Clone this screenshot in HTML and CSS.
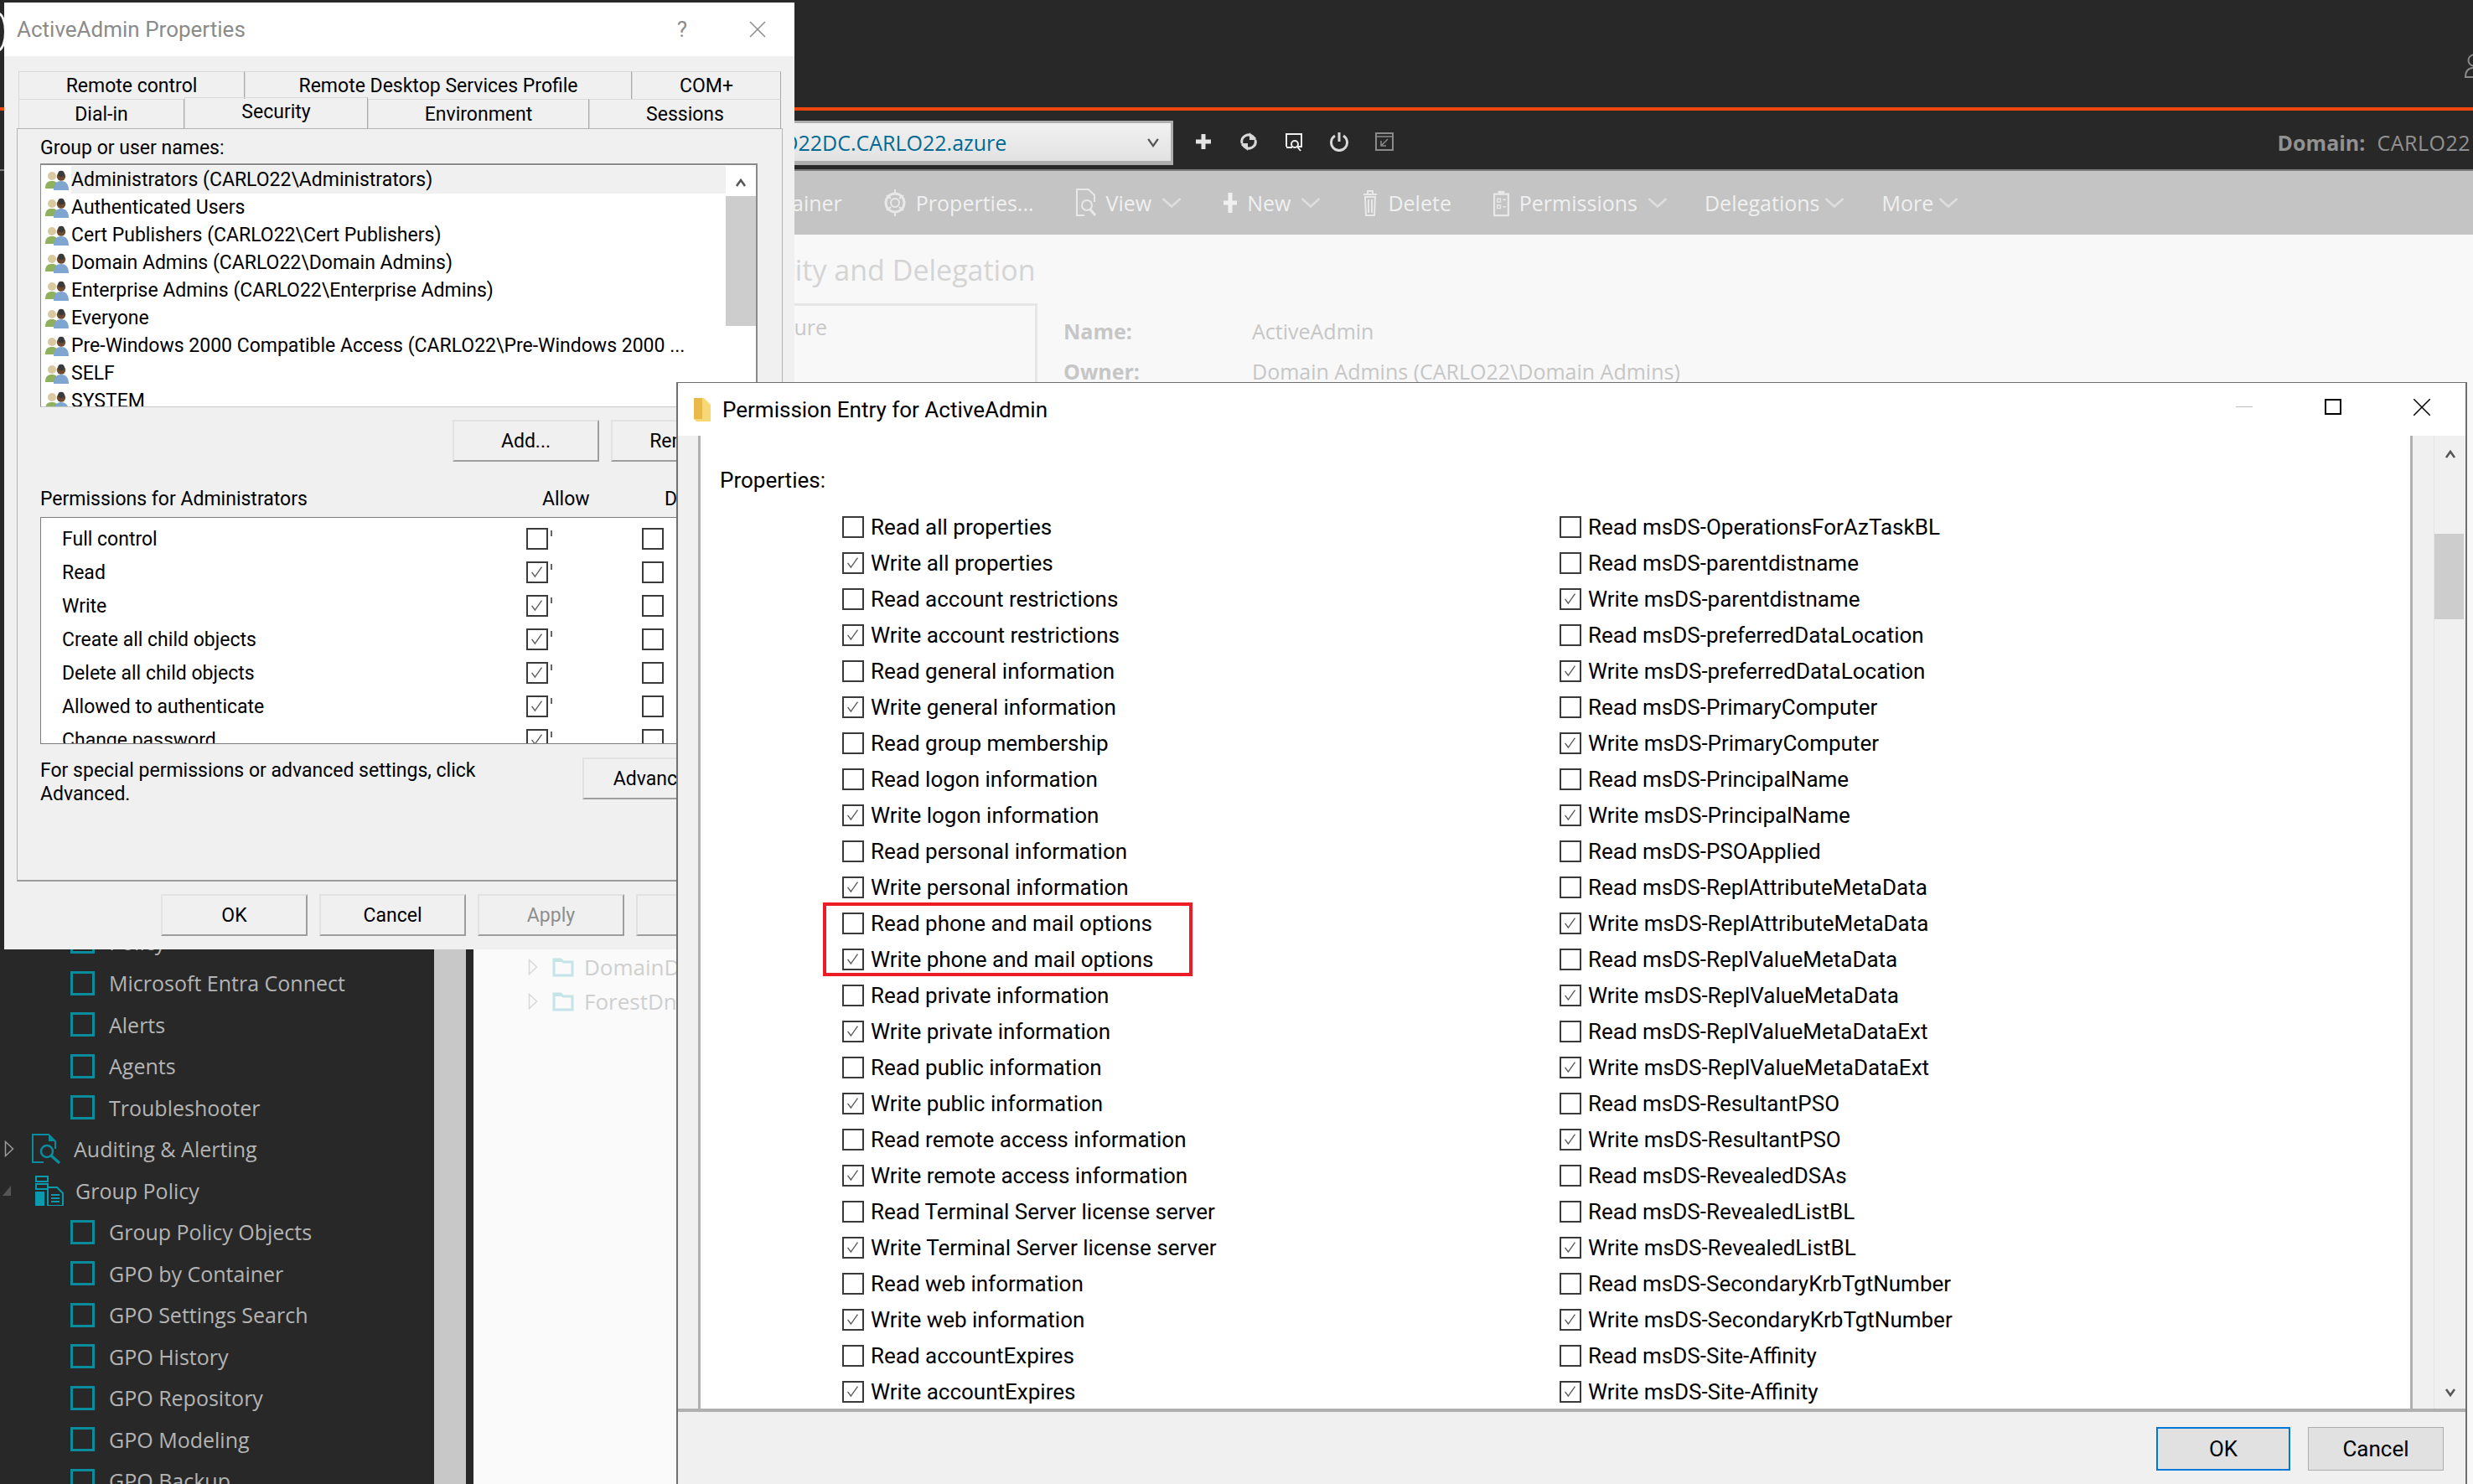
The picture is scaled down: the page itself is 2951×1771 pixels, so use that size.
FILE: index.html
```html
<!DOCTYPE html>
<html lang="en">
<head>
<meta charset="utf-8">
<title>ActiveAdmin Properties</title>
<link rel="stylesheet" href="styles.css">
</head>
<body>
<svg class="defs" width="0" height="0" aria-hidden="true">
  <symbol id="tick" viewBox="0 0 20 20"><path d="M3 10.5 7.5 16.5 17 3" fill="none" stroke="#5a5a5a" stroke-width="1.6"/></symbol>
  <symbol id="chev" viewBox="0 0 24 14"><path d="M1.5 2 12 11.5 22.5 2" fill="none" stroke="currentColor" stroke-width="2.6"/></symbol>
  <symbol id="users" viewBox="0 0 28 24">
    <circle cx="8" cy="7" r="5" fill="#d8c9a0"/><path d="M0 22c0-7 3-9 8-9s7 2 7 9z" fill="#8fb05c"/>
    <circle cx="19" cy="7.500" r="5.200" fill="#6e4a30"/><circle cx="19" cy="4.500" r="3.800" fill="#3a3a3a"/>
    <path d="M10 24c0-8 4-11 9-11s9 3 9 11z" fill="#7ea6d0"/>
  </symbol>
  <symbol id="sq" viewBox="0 0 29 29"><rect x="1.500" y="1.500" width="26" height="26" fill="none" stroke="#0a8c9c" stroke-width="3"/></symbol>
  <symbol id="folder" viewBox="0 0 26 24"><path d="M2 22V3h8l3 3h11v16z" fill="none" stroke="#c4e4e8" stroke-width="3"/><path d="M2 3h8l3 3H2z" fill="#c4e4e8"/></symbol>
  <symbol id="tri" viewBox="0 0 12 20"><path d="M1.500 1.500 10.500 10 1.500 18.500z" fill="none" stroke="currentColor" stroke-width="1.500"/></symbol>
</svg>

<div class="app">
  <header class="top"></header>
  <div class="sub">
    <div class="domain-select"><span class="domain-name">CARLO22DC.CARLO22.azure</span><svg class="select-chev" viewBox="0 0 12 10"><path d="M1 1.500 6 8.500 11 1.500" fill="none" stroke="#555" stroke-width="2"/></svg></div>
    <div class="sub-icons">
      <svg class="sub-icon" viewBox="0 0 24 24"><path d="M12 3v18M3 12h18" stroke="#e4e4e4" stroke-width="5" fill="none"/></svg>
      <svg class="sub-icon" viewBox="0 0 24 24"><path d="M4 14a8 8 0 0 1 13-8l3 3M20 10a8 8 0 0 1-13 8l-3-3" stroke="#d8d8d8" stroke-width="3" fill="none"/><path d="M13 1v9h8zM11 23v-9H3z" fill="#d8d8d8"/></svg>
      <svg class="sub-icon" viewBox="0 0 24 24"><path d="M3 18V3h18v15h-6" stroke="#eee" stroke-width="2" fill="none"/><circle cx="13" cy="15" r="4" stroke="#eee" stroke-width="2" fill="none"/><path d="M16 18l4 5M3 19h7" stroke="#eee" stroke-width="2"/></svg>
      <svg class="sub-icon" viewBox="0 0 24 24"><path d="M7 5a9.500 9.500 0 1 0 10 0" stroke="#d8d8d8" stroke-width="3" fill="none"/><path d="M12 1v11" stroke="#d8d8d8" stroke-width="3"/></svg>
      <svg class="sub-icon" viewBox="0 0 24 24"><rect x="2" y="2" width="20" height="20" fill="none" stroke="#8a8a8a" stroke-width="2"/><path d="M2 6h20M16 9l-8 8M8 11v6h6" stroke="#8a8a8a" stroke-width="1.500" fill="none"/></svg>
    </div>
    <div class="domain-info"><b class="domain-label">Domain:</b><span class="domain-value">CARLO22</span></div>
  </div>

  <div class="workspace">
    <aside class="sidebar">
      <div class="side-list">
        <div class="side-row child"><svg class="side-sq"><use href="#sq"/></svg>Policy</div>
        <div class="side-row child"><svg class="side-sq"><use href="#sq"/></svg>Microsoft Entra Connect</div>
        <div class="side-row child"><svg class="side-sq"><use href="#sq"/></svg>Alerts</div>
        <div class="side-row child"><svg class="side-sq"><use href="#sq"/></svg>Agents</div>
        <div class="side-row child"><svg class="side-sq"><use href="#sq"/></svg>Troubleshooter</div>
        <div class="side-row parent">
          <svg class="side-tri"><use href="#tri"/></svg>
          <svg class="side-icon" viewBox="0 0 36 36"><path d="M14 34H1V1h19l8 8v9" fill="none" stroke="#0a8c9c" stroke-width="2"/><path d="M20 1v8h8z" fill="#0a8c9c"/><circle cx="18" cy="21" r="7" fill="none" stroke="#0a8c9c" stroke-width="2.500"/><path d="M23 26l10 9" stroke="#0a8c9c" stroke-width="3.500"/></svg>
          Auditing &amp; Alerting
        </div>
        <div class="side-row parent">
          <span class="side-open"></span>
          <svg class="side-icon" viewBox="0 0 36 36"><path d="M3 1h14v6H3zM3 10h14v6H3z" fill="none" stroke="#0a9aae" stroke-width="2"/><path d="M2 19h11v17H2z" fill="#0a9aae"/><path d="M17 14h11l7 7v15H17z" fill="none" stroke="#0a9aae" stroke-width="2"/><path d="M21 23h10M21 27h10M21 31h10" stroke="#0a9aae" stroke-width="2"/></svg>
          Group Policy
        </div>
        <div class="side-row child"><svg class="side-sq"><use href="#sq"/></svg>Group Policy Objects</div>
        <div class="side-row child"><svg class="side-sq"><use href="#sq"/></svg>GPO by Container</div>
        <div class="side-row child"><svg class="side-sq"><use href="#sq"/></svg>GPO Settings Search</div>
        <div class="side-row child"><svg class="side-sq"><use href="#sq"/></svg>GPO History</div>
        <div class="side-row child"><svg class="side-sq"><use href="#sq"/></svg>GPO Repository</div>
        <div class="side-row child"><svg class="side-sq"><use href="#sq"/></svg>GPO Modeling</div>
        <div class="side-row child"><svg class="side-sq"><use href="#sq"/></svg>GPO Backup</div>
      </div>
      <div class="side-scroll"></div>
    </aside>

    <main class="main">
      <div class="toolbar">
        <span class="tool tool-first">Container</span>
        <span class="tool"><svg class="tool-icon" viewBox="0 0 26 34"><circle cx="13" cy="17" r="11" fill="none" stroke="#e8e8e8" stroke-width="3"/><circle cx="13" cy="17" r="5" fill="none" stroke="#e8e8e8" stroke-width="2"/><path d="M13 1v6M13 27v6M3 8l5 4M18 22l5 4M3 26l5-4M18 12l5-4" stroke="#e8e8e8" stroke-width="2"/></svg>Properties...</span>
        <span class="tool"><svg class="tool-icon" viewBox="0 0 24 34"><path d="M10 32H1V1h14l7 7v8" fill="none" stroke="#e8e8e8" stroke-width="2"/><circle cx="13" cy="20" r="6" fill="none" stroke="#e8e8e8" stroke-width="2"/><path d="M17 25l6 7" stroke="#e8e8e8" stroke-width="3"/></svg>View<svg class="tool-chev"><use href="#chev"/></svg></span>
        <span class="tool tool-new"><svg class="tool-icon" viewBox="0 0 16 34"><path d="M8 5v24M0 17h16" stroke="#f0f0f0" stroke-width="5"/></svg>New<svg class="tool-chev"><use href="#chev"/></svg></span>
        <span class="tool"><svg class="tool-icon" viewBox="0 0 18 34"><path d="M1 7h16M6 7V3h6v4" stroke="#e8e8e8" stroke-width="2" fill="none"/><path d="M3 10h12l-1 22H4z" fill="none" stroke="#e8e8e8" stroke-width="2"/><path d="M7 13v16M11 13v16" stroke="#e8e8e8" stroke-width="2"/></svg>Delete</span>
        <span class="tool"><svg class="tool-icon" viewBox="0 0 20 36"><path d="M1 7h18v27H1z" fill="none" stroke="#e8e8e8" stroke-width="2.500"/><path d="M6 7V3h8v4z" fill="#e8e8e8"/><path d="M5 13h4v4H5zM12 14h4M5 21h4v4H5zM12 23h4" stroke="#e8e8e8" stroke-width="1.500" fill="none"/></svg>Permissions<svg class="tool-chev"><use href="#chev"/></svg></span>
        <span class="tool tool-tight">Delegations<svg class="tool-chev"><use href="#chev"/></svg></span>
        <span class="tool tool-tight">More<svg class="tool-chev"><use href="#chev"/></svg></span>
      </div>
      <div class="panes">
        <div class="tree">
          <div class="tree-row"><svg class="tree-tri"><use href="#tri"/></svg><svg class="tree-folder"><use href="#folder"/></svg>DomainDnsZones</div>
          <div class="tree-row"><svg class="tree-tri"><use href="#tri"/></svg><svg class="tree-folder"><use href="#folder"/></svg>ForestDnsZones</div>
        </div>
        <div class="detail">
          <h1 class="detail-title">Security and Delegation</h1>
          <div class="detail-body">
            <div class="detail-card">Structure</div>
            <div class="detail-fields">
              <div class="field"><span class="field-label">Name:</span><span>ActiveAdmin</span></div>
              <div class="field"><span class="field-label">Owner:</span><span>Domain Admins (CARLO22\Domain Admins)</span></div>
            </div>
          </div>
        </div>
      </div>
    </main>
  </div>
</div>

<div class="corner-logo"></div>
<svg class="person" viewBox="0 0 24 30"><circle cx="12" cy="8" r="6.500" fill="none" stroke="#8a8a8a" stroke-width="2"/><path d="M2 28c0-8 4-11 10-11s10 3 10 11z" fill="none" stroke="#8a8a8a" stroke-width="2"/></svg>

<section class="win-props">
  <div class="props-title"><span class="props-title-text">ActiveAdmin Properties</span><span class="props-help">?</span><svg class="props-x" viewBox="0 0 20 20"><path d="M1 1 19 19M19 1 1 19" stroke="#8a8a8a" stroke-width="1.500"/></svg></div>
  <div class="props-body">
    <div class="tab-row tab-row-back">
      <span class="tab tw1">Remote control</span><span class="tab tw2">Remote Desktop Services Profile</span><span class="tab tw3">COM+</span>
    </div>
    <div class="tab-row tab-row-front">
      <span class="tab tw4">Dial-in</span><span class="tab tw5 tab-active">Security</span><span class="tab tw6">Environment</span><span class="tab tw7">Sessions</span>
    </div>
    <div class="panel">
      <div class="label">Group or user names:</div>
      <div class="names">
        <div class="names-list">
          <div class="name-row name-sel"><svg class="users"><use href="#users"/></svg><span class="name-text">Administrators (CARLO22\Administrators)</span></div>
          <div class="name-row"><svg class="users"><use href="#users"/></svg><span class="name-text">Authenticated Users</span></div>
          <div class="name-row"><svg class="users"><use href="#users"/></svg><span class="name-text">Cert Publishers (CARLO22\Cert Publishers)</span></div>
          <div class="name-row"><svg class="users"><use href="#users"/></svg><span class="name-text">Domain Admins (CARLO22\Domain Admins)</span></div>
          <div class="name-row"><svg class="users"><use href="#users"/></svg><span class="name-text">Enterprise Admins (CARLO22\Enterprise Admins)</span></div>
          <div class="name-row"><svg class="users"><use href="#users"/></svg><span class="name-text">Everyone</span></div>
          <div class="name-row"><svg class="users"><use href="#users"/></svg><span class="name-text">Pre-Windows 2000 Compatible Access (CARLO22\Pre-Windows 2000 ...</span></div>
          <div class="name-row"><svg class="users"><use href="#users"/></svg><span class="name-text">SELF</span></div>
          <div class="name-row"><svg class="users"><use href="#users"/></svg><span class="name-text">SYSTEM</span></div>
        </div>
        <div class="names-scroll"><svg class="names-up" viewBox="0 0 14 12"><path d="M2 10 7 3 12 10" fill="none" stroke="#555" stroke-width="2.500"/></svg><div class="names-thumb"></div></div>
      </div>
      <div class="btn-row"><span class="btn">Add...</span><span class="btn">Remove</span></div>
      <div class="perm-head"><span class="perm-head-name">Permissions for Administrators</span><span class="perm-head-allow">Allow</span><span>Deny</span></div>
      <div class="perms">
        <div class="perm"><span class="perm-name">Full control</span><span class="cb"></span><span class="perm-tick"></span><span class="cb cb-deny"></span></div>
        <div class="perm"><span class="perm-name">Read</span><span class="cb"><svg class="tick"><use href="#tick"/></svg></span><span class="perm-tick"></span><span class="cb cb-deny"></span></div>
        <div class="perm"><span class="perm-name">Write</span><span class="cb"><svg class="tick"><use href="#tick"/></svg></span><span class="perm-tick"></span><span class="cb cb-deny"></span></div>
        <div class="perm"><span class="perm-name">Create all child objects</span><span class="cb"><svg class="tick"><use href="#tick"/></svg></span><span class="perm-tick"></span><span class="cb cb-deny"></span></div>
        <div class="perm"><span class="perm-name">Delete all child objects</span><span class="cb"><svg class="tick"><use href="#tick"/></svg></span><span class="perm-tick"></span><span class="cb cb-deny"></span></div>
        <div class="perm"><span class="perm-name">Allowed to authenticate</span><span class="cb"><svg class="tick"><use href="#tick"/></svg></span><span class="perm-tick"></span><span class="cb cb-deny"></span></div>
        <div class="perm"><span class="perm-name">Change password</span><span class="cb"><svg class="tick"><use href="#tick"/></svg></span><span class="perm-tick"></span><span class="cb cb-deny"></span></div>
      </div>
      <div class="adv-row"><p class="adv-text">For special permissions or advanced settings, click<br>Advanced.</p><span class="btn">Advanced</span></div>
    </div>
    <div class="props-foot"><span class="btn">OK</span><span class="btn">Cancel</span><span class="btn btn-off">Apply</span><span class="btn">Help</span></div>
  </div>
</section>

<section class="win-entry">
  <div class="entry-title">
    <svg class="entry-folder" viewBox="0 0 22 30"><path d="M1 1h12l8 8v20H4l-3-3z" fill="#f8d775"/><path d="M1 1h10v25H1z" fill="#e9b949"/></svg>
    <span class="entry-title-text">Permission Entry for ActiveAdmin</span>
    <span class="entry-controls">
      <span class="ctl-min"></span><span class="ctl-max"></span>
      <svg class="ctl-close" viewBox="0 0 20 20"><path d="M0 0 20 20M20 0 0 20" stroke="#000" stroke-width="1.500"/></svg>
    </span>
  </div>
  <div class="entry-main">
    <div class="entry-strip"></div>
    <div class="entry-content">
      <div class="entry-label">Properties:</div>
      <div class="entry-grid">
        <div class="col">
          <div class="row"><span class="cb"></span>Read all properties</div>
          <div class="row"><span class="cb"><svg class="tick"><use href="#tick"/></svg></span>Write all properties</div>
          <div class="row"><span class="cb"></span>Read account restrictions</div>
          <div class="row"><span class="cb"><svg class="tick"><use href="#tick"/></svg></span>Write account restrictions</div>
          <div class="row"><span class="cb"></span>Read general information</div>
          <div class="row"><span class="cb"><svg class="tick"><use href="#tick"/></svg></span>Write general information</div>
          <div class="row"><span class="cb"></span>Read group membership</div>
          <div class="row"><span class="cb"></span>Read logon information</div>
          <div class="row"><span class="cb"><svg class="tick"><use href="#tick"/></svg></span>Write logon information</div>
          <div class="row"><span class="cb"></span>Read personal information</div>
          <div class="row"><span class="cb"><svg class="tick"><use href="#tick"/></svg></span>Write personal information</div>
          <div class="row"><span class="cb"></span>Read phone and mail options</div>
          <div class="row"><span class="cb"><svg class="tick"><use href="#tick"/></svg></span>Write phone and mail options</div>
          <div class="row"><span class="cb"></span>Read private information</div>
          <div class="row"><span class="cb"><svg class="tick"><use href="#tick"/></svg></span>Write private information</div>
          <div class="row"><span class="cb"></span>Read public information</div>
          <div class="row"><span class="cb"><svg class="tick"><use href="#tick"/></svg></span>Write public information</div>
          <div class="row"><span class="cb"></span>Read remote access information</div>
          <div class="row"><span class="cb"><svg class="tick"><use href="#tick"/></svg></span>Write remote access information</div>
          <div class="row"><span class="cb"></span>Read Terminal Server license server</div>
          <div class="row"><span class="cb"><svg class="tick"><use href="#tick"/></svg></span>Write Terminal Server license server</div>
          <div class="row"><span class="cb"></span>Read web information</div>
          <div class="row"><span class="cb"><svg class="tick"><use href="#tick"/></svg></span>Write web information</div>
          <div class="row"><span class="cb"></span>Read accountExpires</div>
          <div class="row"><span class="cb"><svg class="tick"><use href="#tick"/></svg></span>Write accountExpires</div>
        </div>
        <div class="col">
          <div class="row"><span class="cb"></span>Read msDS-OperationsForAzTaskBL</div>
          <div class="row"><span class="cb"></span>Read msDS-parentdistname</div>
          <div class="row"><span class="cb"><svg class="tick"><use href="#tick"/></svg></span>Write msDS-parentdistname</div>
          <div class="row"><span class="cb"></span>Read msDS-preferredDataLocation</div>
          <div class="row"><span class="cb"><svg class="tick"><use href="#tick"/></svg></span>Write msDS-preferredDataLocation</div>
          <div class="row"><span class="cb"></span>Read msDS-PrimaryComputer</div>
          <div class="row"><span class="cb"><svg class="tick"><use href="#tick"/></svg></span>Write msDS-PrimaryComputer</div>
          <div class="row"><span class="cb"></span>Read msDS-PrincipalName</div>
          <div class="row"><span class="cb"><svg class="tick"><use href="#tick"/></svg></span>Write msDS-PrincipalName</div>
          <div class="row"><span class="cb"></span>Read msDS-PSOApplied</div>
          <div class="row"><span class="cb"></span>Read msDS-ReplAttributeMetaData</div>
          <div class="row"><span class="cb"><svg class="tick"><use href="#tick"/></svg></span>Write msDS-ReplAttributeMetaData</div>
          <div class="row"><span class="cb"></span>Read msDS-ReplValueMetaData</div>
          <div class="row"><span class="cb"><svg class="tick"><use href="#tick"/></svg></span>Write msDS-ReplValueMetaData</div>
          <div class="row"><span class="cb"></span>Read msDS-ReplValueMetaDataExt</div>
          <div class="row"><span class="cb"><svg class="tick"><use href="#tick"/></svg></span>Write msDS-ReplValueMetaDataExt</div>
          <div class="row"><span class="cb"></span>Read msDS-ResultantPSO</div>
          <div class="row"><span class="cb"><svg class="tick"><use href="#tick"/></svg></span>Write msDS-ResultantPSO</div>
          <div class="row"><span class="cb"></span>Read msDS-RevealedDSAs</div>
          <div class="row"><span class="cb"></span>Read msDS-RevealedListBL</div>
          <div class="row"><span class="cb"><svg class="tick"><use href="#tick"/></svg></span>Write msDS-RevealedListBL</div>
          <div class="row"><span class="cb"></span>Read msDS-SecondaryKrbTgtNumber</div>
          <div class="row"><span class="cb"><svg class="tick"><use href="#tick"/></svg></span>Write msDS-SecondaryKrbTgtNumber</div>
          <div class="row"><span class="cb"></span>Read msDS-Site-Affinity</div>
          <div class="row"><span class="cb"><svg class="tick"><use href="#tick"/></svg></span>Write msDS-Site-Affinity</div>
        </div>
      </div>
      <div class="highlight"></div>
    </div>
    <div class="entry-gutter"></div>
    <div class="entry-scroll">
      <svg class="scroll-arrow" viewBox="0 0 14 12"><path d="M2 10 7 3 12 10" fill="none" stroke="#555" stroke-width="2.500"/></svg>
      <div class="entry-thumb"></div>
      <svg class="scroll-arrow scroll-down" viewBox="0 0 14 12"><path d="M2 2 7 9 12 2" fill="none" stroke="#555" stroke-width="2.500"/></svg>
    </div>
  </div>
  <div class="entry-foot"><span class="foot-btn foot-ok">OK</span><span class="foot-btn">Cancel</span></div>
</section>
</body>
</html>
```
FILE: styles.css
```css
* { box-sizing: border-box; }
html, body { margin: 0; padding: 0; }
body {
  position: relative;
  width: 2951px;
  height: 1771px;
  overflow: hidden;
  background: #282828;
  font-family: "Open Sans", "Liberation Sans", sans-serif;
}
.defs { position: absolute; }
.app { display: flex; flex-direction: column; height: 100%; }
.top { height: 128px; background: #282828; border-bottom: 0; flex: none; }
.sub {
  flex: none;
  height: 76px;
  display: flex;
  align-items: flex-start;
  border-top: 4px solid #f2460f;
  border-bottom: 2px solid #7c7c7c;
  background: #282828;
}
.domain-select {
  margin: 12px 0 0 860px;
  width: 540px;
  height: 53px;
  display: flex;
  align-items: center;
  padding-left: 10px;
  background: linear-gradient(#f1f1f1, #e2e2e2);
  border: 3px solid #aeaeae;
  border-bottom-width: 5px;
  position: relative;
}
.domain-name { color: #006a94; font-size: 25px; flex: 1; }
.select-chev { width: 14px; height: 12px; margin-right: 14px; }
.sub-icons { display: flex; gap: 30px; margin: 25px 0 0 24px; }
.sub-icon { width: 24px; height: 24px; display: block; }
.domain-info { margin-left: auto; color: #929292; font-size: 25px; display: flex; gap: 14px; padding: 20px 3px 0 0; line-height: 36px; }
.domain-label { font-weight: 700; }
.domain-value { letter-spacing: .5px; }

.workspace { flex: 1; display: flex; min-height: 0; }
.sidebar { width: 565px; flex: none; display: flex; background: #282828; border-right: 9px solid #282828; overflow: hidden; }
.side-list { width: 518px; padding-top: 895px; flex: none; }
.side-scroll { width: 38px; background: #c8c8c8; flex: none; }
.side-row { height: 49.5px; display: flex; align-items: center; color: #b4b4b4; font-size: 25px; white-space: nowrap; }
.side-row.child { padding-left: 84px; }
.side-sq { width: 29px; height: 29px; margin-right: 17px; flex: none; }
.side-tri { width: 12px; height: 20px; margin-left: 5px; color: #9a9a9a; flex: none; }
.side-open { width: 0; height: 0; margin-left: 3px; border-style: solid; border-width: 0 0 12px 10px; border-color: transparent transparent #555 transparent; flex: none; margin-right: 7px; }
.side-icon { width: 36px; height: 36px; margin: 0 14px 0 21px; flex: none; }
.side-open + .side-icon { margin-left: 20px; }

.main { flex: 1; display: flex; flex-direction: column; min-width: 0; background: #f8f8f8; }
.toolbar { height: 76px; flex: none; background: #c4c4c4; display: flex; align-items: center; color: #f0f0f0; font-size: 25px; gap: 50px; white-space: nowrap; padding-left: 325px; }
.tool { display: flex; align-items: center; gap: 12px; }
.tool-tight .tool-chev { margin-left: -6px; }
.tool-tight { margin-left: -6px; }
.tool-icon { height: 34px; width: auto; flex: none; }
.tool-chev { width: 24px; height: 14px; color: #dedede; flex: none; }
.panes { flex: 1; display: flex; min-height: 0; }
.tree { width: 290px; flex: none; padding-top: 853px; color: #cfcfcf; font-size: 26px; background: #fafafa; overflow: hidden; }
.tree-row { height: 41px; display: flex; align-items: center; white-space: nowrap; }
.tree-tri { width: 12px; height: 20px; margin-left: 65px; color: #d8d8d8; flex: none; }
.tree-folder { width: 26px; height: 24px; margin: 0 12px 0 17px; flex: none; }
.detail { flex: 1; padding-top: 20px; min-width: 0; }
.detail-title { margin: 0 0 18px; padding-left: 5px; font-size: 34px; font-weight: 400; line-height: 44px; color: #d4d4d4; }
.detail-body { display: flex; }
.detail-card { width: 383px; height: 400px; border: solid #e6e6e6; border-width: 3px 3px 0 0; padding: 8px 0 0 10px; color: #c8c8c8; font-size: 25px; flex: none; text-align: right; padding-right: 248px; }
.detail-fields { padding: 9px 0 0 31px; color: #c6c6c6; font-size: 25px; }
.field { height: 48px; display: flex; align-items: center; }
.field-label { width: 225px; font-weight: 700; }

.corner-logo { position: absolute; left: -14px; top: 14px; width: 22px; height: 48px; border: 3px solid #f5f5f5; border-radius: 50%; }
.person { position: absolute; left: 2940px; top: 64px; width: 24px; height: 30px; }

/* Properties window */
.win-props {
  position: absolute;
  left: 5px;
  top: 3px;
  width: 943px;
  height: 1130px;
  background: #f0f0f0;
  color: #000;
  font-family: "Roboto", "Liberation Sans", sans-serif;
  font-size: 23px;
  display: flex;
  flex-direction: column;
}
.props-title { height: 64px; background: #fff; display: flex; align-items: center; padding-left: 15px; flex: none; }
.props-title-text { color: #8b8b8b; font-size: 26px; flex: 1; }
.props-help { color: #8b8b8b; font-size: 26px; margin-right: 74px; }
.props-x { width: 20px; height: 20px; margin-right: 34px; }
.props-body { flex: 1; display: flex; flex-direction: column; padding: 18px 14px 0 15px; }
.tab-row { display: flex; margin-left: 2px; width: 910px; flex: none; }
.tab-row-back { height: 33px; }
.tab-row-front { height: 35px; }
.tab { display: flex; align-items: center; justify-content: center; border: solid #d9d9d9; border-width: 1px 1px 0 1px; border-right-color: #a9a9a9; }
.tw1 { width: 270px; } .tw2 { width: 462px; } .tw3 { width: 178px; }
.tw4 { width: 198px; } .tw5 { width: 219px; } .tw6 { width: 264px; } .tw7 { width: 229px; }
.tab-active { margin-top: -2px; padding-bottom: 4px; }
.panel { flex: none; height: 899px; border: 1px solid #b4b4b4; border-bottom-width: 2px; border-bottom-color: #9c9c9c; padding: 9px 0 0 27px; }
.label { line-height: 28px; height: 28px; }
.names { margin-top: 4px; width: 856px; height: 291px; background: #fff; border: 2px solid #8a8a8a; border-width: 2px 2px 1px 1px; border-bottom-color: #c8c8c8; display: flex; overflow: hidden; }
.names-list { flex: 1; padding-top: 1px; }
.name-row { height: 33px; display: flex; align-items: center; padding-left: 5px; white-space: nowrap; overflow: visible; }
.users { width: 28px; height: 24px; margin-right: 3px; flex: none; }
.name-sel .name-text { background: #f0f0f0; flex: 1; line-height: 33px; }
.name-row .name-text { line-height: 33px; }
.names-scroll { width: 36px; flex: none; margin-top: 1px; }
.names-up { width: 14px; height: 12px; display: block; margin: 14px 0 10px 11px; }
.names-thumb { height: 155px; background: #cdcdcd; }
.btn-row { display: flex; gap: 14px; width: 856px; justify-content: flex-end; margin-top: 15px; }
.btn { width: 175px; height: 50px; flex: none; display: flex; align-items: center; justify-content: center; background: #f0f0f0; border: 2px solid #e2e2e2; border-right-color: #9e9e9e; border-bottom-color: #9e9e9e; }
.btn-off { color: #8e8e8e; }
.perm-head { margin-top: 31px; height: 28px; line-height: 28px; display: flex; }
.perm-head-name { width: 599px; }
.perm-head-allow { width: 146px; }
.perms { margin-top: 7px; width: 856px; height: 271px; background: #fff; border: 1px solid #7c7c7c; padding-top: 5px; overflow: hidden; }
.perm { height: 40px; display: flex; align-items: center; }
.perm-name { width: 579px; padding-left: 25px; flex: none; }
.perm-tick { width: 2px; height: 7px; margin: -14px 107px 0 3px; background: #666; flex: none; }
.adv-row { display: flex; justify-content: space-between; width: 822px; margin-top: 16px; }
.adv-text { margin: 2px 0 0; line-height: 28px; }
.props-foot { display: flex; gap: 14px; justify-content: flex-end; margin-top: 15px; }

/* shared checkbox */
.cb { width: 26px; height: 26px; border: 2.500px solid #3a3a3a; background: #fff; display: block; flex: none; position: relative; }
.tick { width: 17px; height: 17px; display: block; margin: 2px; }

/* Permission entry window */
.win-entry {
  position: absolute;
  left: 807px;
  top: 456px;
  width: 2137px;
  height: 1315px;
  background: #fff;
  border: solid #6e6e6e;
  border-width: 1px 2px 0 2px;
  color: #000;
  font-family: "Roboto", "Liberation Sans", sans-serif;
  font-size: 26px;
  display: flex;
  flex-direction: column;
}
.entry-title { height: 63px; flex: none; display: flex; align-items: center; padding-left: 18px; }
.entry-folder { width: 22px; height: 30px; margin-right: 13px; flex: none; }
.entry-title-text { flex: 1; }
.entry-controls { display: flex; align-items: center; padding-right: 42px; gap: 86px; margin-top: -6px; }
.ctl-min { width: 20px; height: 1px; background: #bdbdbd; }
.ctl-max { width: 20px; height: 19px; border: 2px solid #000; }
.ctl-close { width: 20px; height: 20px; }
.entry-main { flex: 1; display: flex; min-height: 0; }
.entry-strip { width: 27px; background: #f0f0f0; border-right: 3px solid #b0b0b0; flex: none; }
.entry-content { flex: 1; padding-top: 32px; overflow: hidden; position: relative; }
.entry-label { height: 43px; line-height: 43px; padding-left: 23px; margin-bottom: 12px; }
.entry-grid { display: grid; grid-template-columns: 856px 1fr; padding-left: 169px; }
.row { height: 43px; display: flex; align-items: center; gap: 8px; white-space: nowrap; }
.highlight { position: absolute; left: 146px; top: 557px; width: 441px; height: 88px; border: 4px solid #ed1c24; }
.entry-gutter { width: 28px; background: #f0f0f0; border-left: 3px solid #b0b0b0; flex: none; }
.entry-scroll { width: 38px; background: #f0f0f0; border-left: 1px solid #e4e4e4; flex: none; display: flex; flex-direction: column; }
.scroll-arrow { width: 14px; height: 12px; margin: 16px 0 0 12px; flex: none; }
.entry-thumb { height: 102px; background: #cdcdcd; margin: 89px 2px 0 0; }
.scroll-down { margin-top: auto; margin-bottom: 13px; }
.entry-foot { height: 90px; flex: none; background: #f0f0f0; border-top: 4px solid #b0b0b0; display: flex; justify-content: flex-end; gap: 21px; padding: 18px 26px 0 0; }
.foot-btn { width: 162px; height: 52px; display: flex; align-items: center; justify-content: center; background: #e1e1e1; border: 1px solid #adadad; }
.foot-ok { width: 160px; border: 2px solid #0078d7; }
```
